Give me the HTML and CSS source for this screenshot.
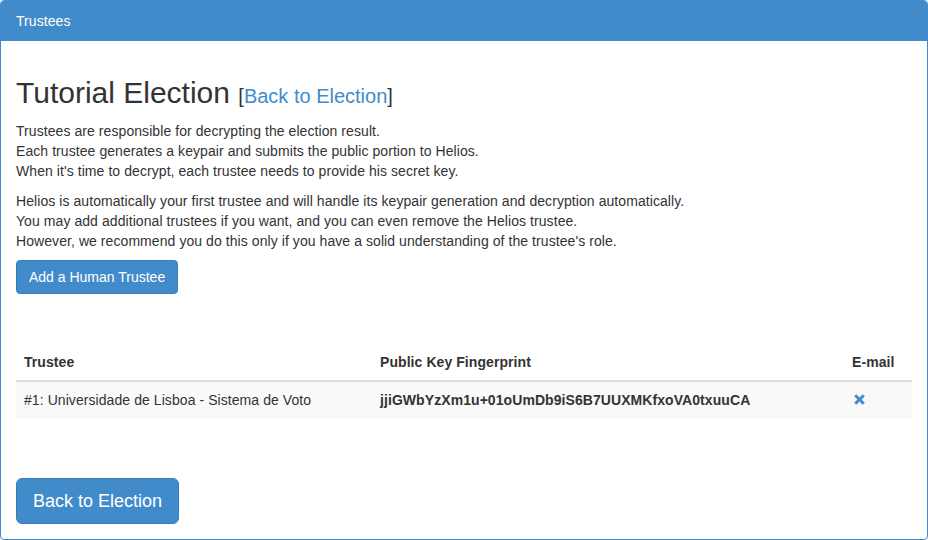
FILE: index.html
```html
<!DOCTYPE html>
<html>
<head>
<meta charset="utf-8">
<title>Trustees</title>
<link rel="stylesheet" href="styles.css">
</head>
<body>
<div class="panel">
  <div class="panel-heading">Trustees</div>
  <div class="panel-body">
    <h2 class="title">Tutorial Election <small>[<a href="#">Back to Election</a>]</small></h2>
    <p>Trustees are responsible for decrypting the election result.<br>
    Each trustee generates a keypair and submits the public portion to Helios.<br>
    When it's time to decrypt, each trustee needs to provide his secret key.</p>
    <p class="last">Helios is automatically your first trustee and will handle its keypair generation and decryption automatically.<br>
    You may add additional trustees if you want, and you can even remove the Helios trustee.<br>
    However, we recommend you do this only if you have a solid understanding of the trustee's role.</p>
    <div class="actions"><a class="btn" href="#">Add a Human Trustee</a></div>
    <table class="table">
      <thead>
        <tr>
          <th class="c1">Trustee</th>
          <th class="c2">Public Key Fingerprint</th>
          <th class="c3">E-mail</th>
        </tr>
      </thead>
      <tbody>
        <tr>
          <td>#1: Universidade de Lisboa - Sistema de Voto</td>
          <td><b>jjiGWbYzXm1u+01oUmDb9iS6B7UUXMKfxoVA0txuuCA</b></td>
          <td><a href="#" class="remove"><svg width="13" height="13" viewBox="0 0 13 13"><path d="M1.2 3.3 L3.3 1.2 L6.5 4.4 L9.7 1.2 L11.8 3.3 L8.6 6.5 L11.8 9.7 L9.7 11.8 L6.5 8.6 L3.3 11.8 L1.2 9.7 L4.4 6.5 Z" fill="#428bca"/></svg></a></td>
        </tr>
      </tbody>
    </table>
    <div class="actions"><a class="btn btn-lg" href="#">Back to Election</a></div>
  </div>
</div>
</body>
</html>
```
FILE: styles.css
```css
* { box-sizing: border-box; }
html, body { margin: 0; padding: 0; }
body {
  font-family: "Liberation Sans", Arial, Helvetica, sans-serif;
  font-size: 14px;
  line-height: 20px;
  color: #333;
  background: #fff;
  letter-spacing: 0.07px;
}
.panel {
  border: 1px solid #428bca;
  border-radius: 4px;
  width: 928px;
  overflow: hidden;
}
.panel-heading {
  background: #428bca;
  color: #fff;
  padding: 10px 15px;
  line-height: 20px;
  font-size: 14px;
}
.panel-body {
  padding: 15px;
}
.title {
  font-size: 30px;
  font-weight: 500;
  line-height: 33px;
  margin: 20px 0 12px;
  letter-spacing: 0;
}
.title small {
  font-size: 20px;
  line-height: 1;
  color: #333;
}
.title a {
  color: #428bca;
  text-decoration: none;
}
p { margin: 0 0 10px; }
p.last { margin-bottom: 9px; }
.actions { display: flex; }
.btn {
  display: block;
  background: #428bca;
  border: 1px solid #357ebd;
  color: #fff;
  text-decoration: none;
  padding: 6px 12px;
  font-size: 14px;
  line-height: 20px;
  border-radius: 4px;
  letter-spacing: 0;
}
.btn-lg {
  padding: 10px 16px;
  font-size: 18px;
  line-height: 24px;
  border-radius: 6px;
}
.table {
  width: 100%;
  border-collapse: collapse;
  border-spacing: 0;
  margin: 50px 0 59px;
}
.table th, .table td {
  padding: 8px;
  line-height: 20px;
  text-align: left;
  vertical-align: top;
}
.table th {
  font-weight: bold;
  border-bottom: 2px solid #ddd;
}
.table td {
  border-top: 1px solid #ddd;
}
.table tbody tr { background: #f9f9f9; }
.c1 { width: 356px; }
.c2 { width: 472px; }
.c3 { width: 68px; }
.remove { display: inline-block; padding-left: 1px; padding-top: 3px; }
.remove svg { display: block; }
```
